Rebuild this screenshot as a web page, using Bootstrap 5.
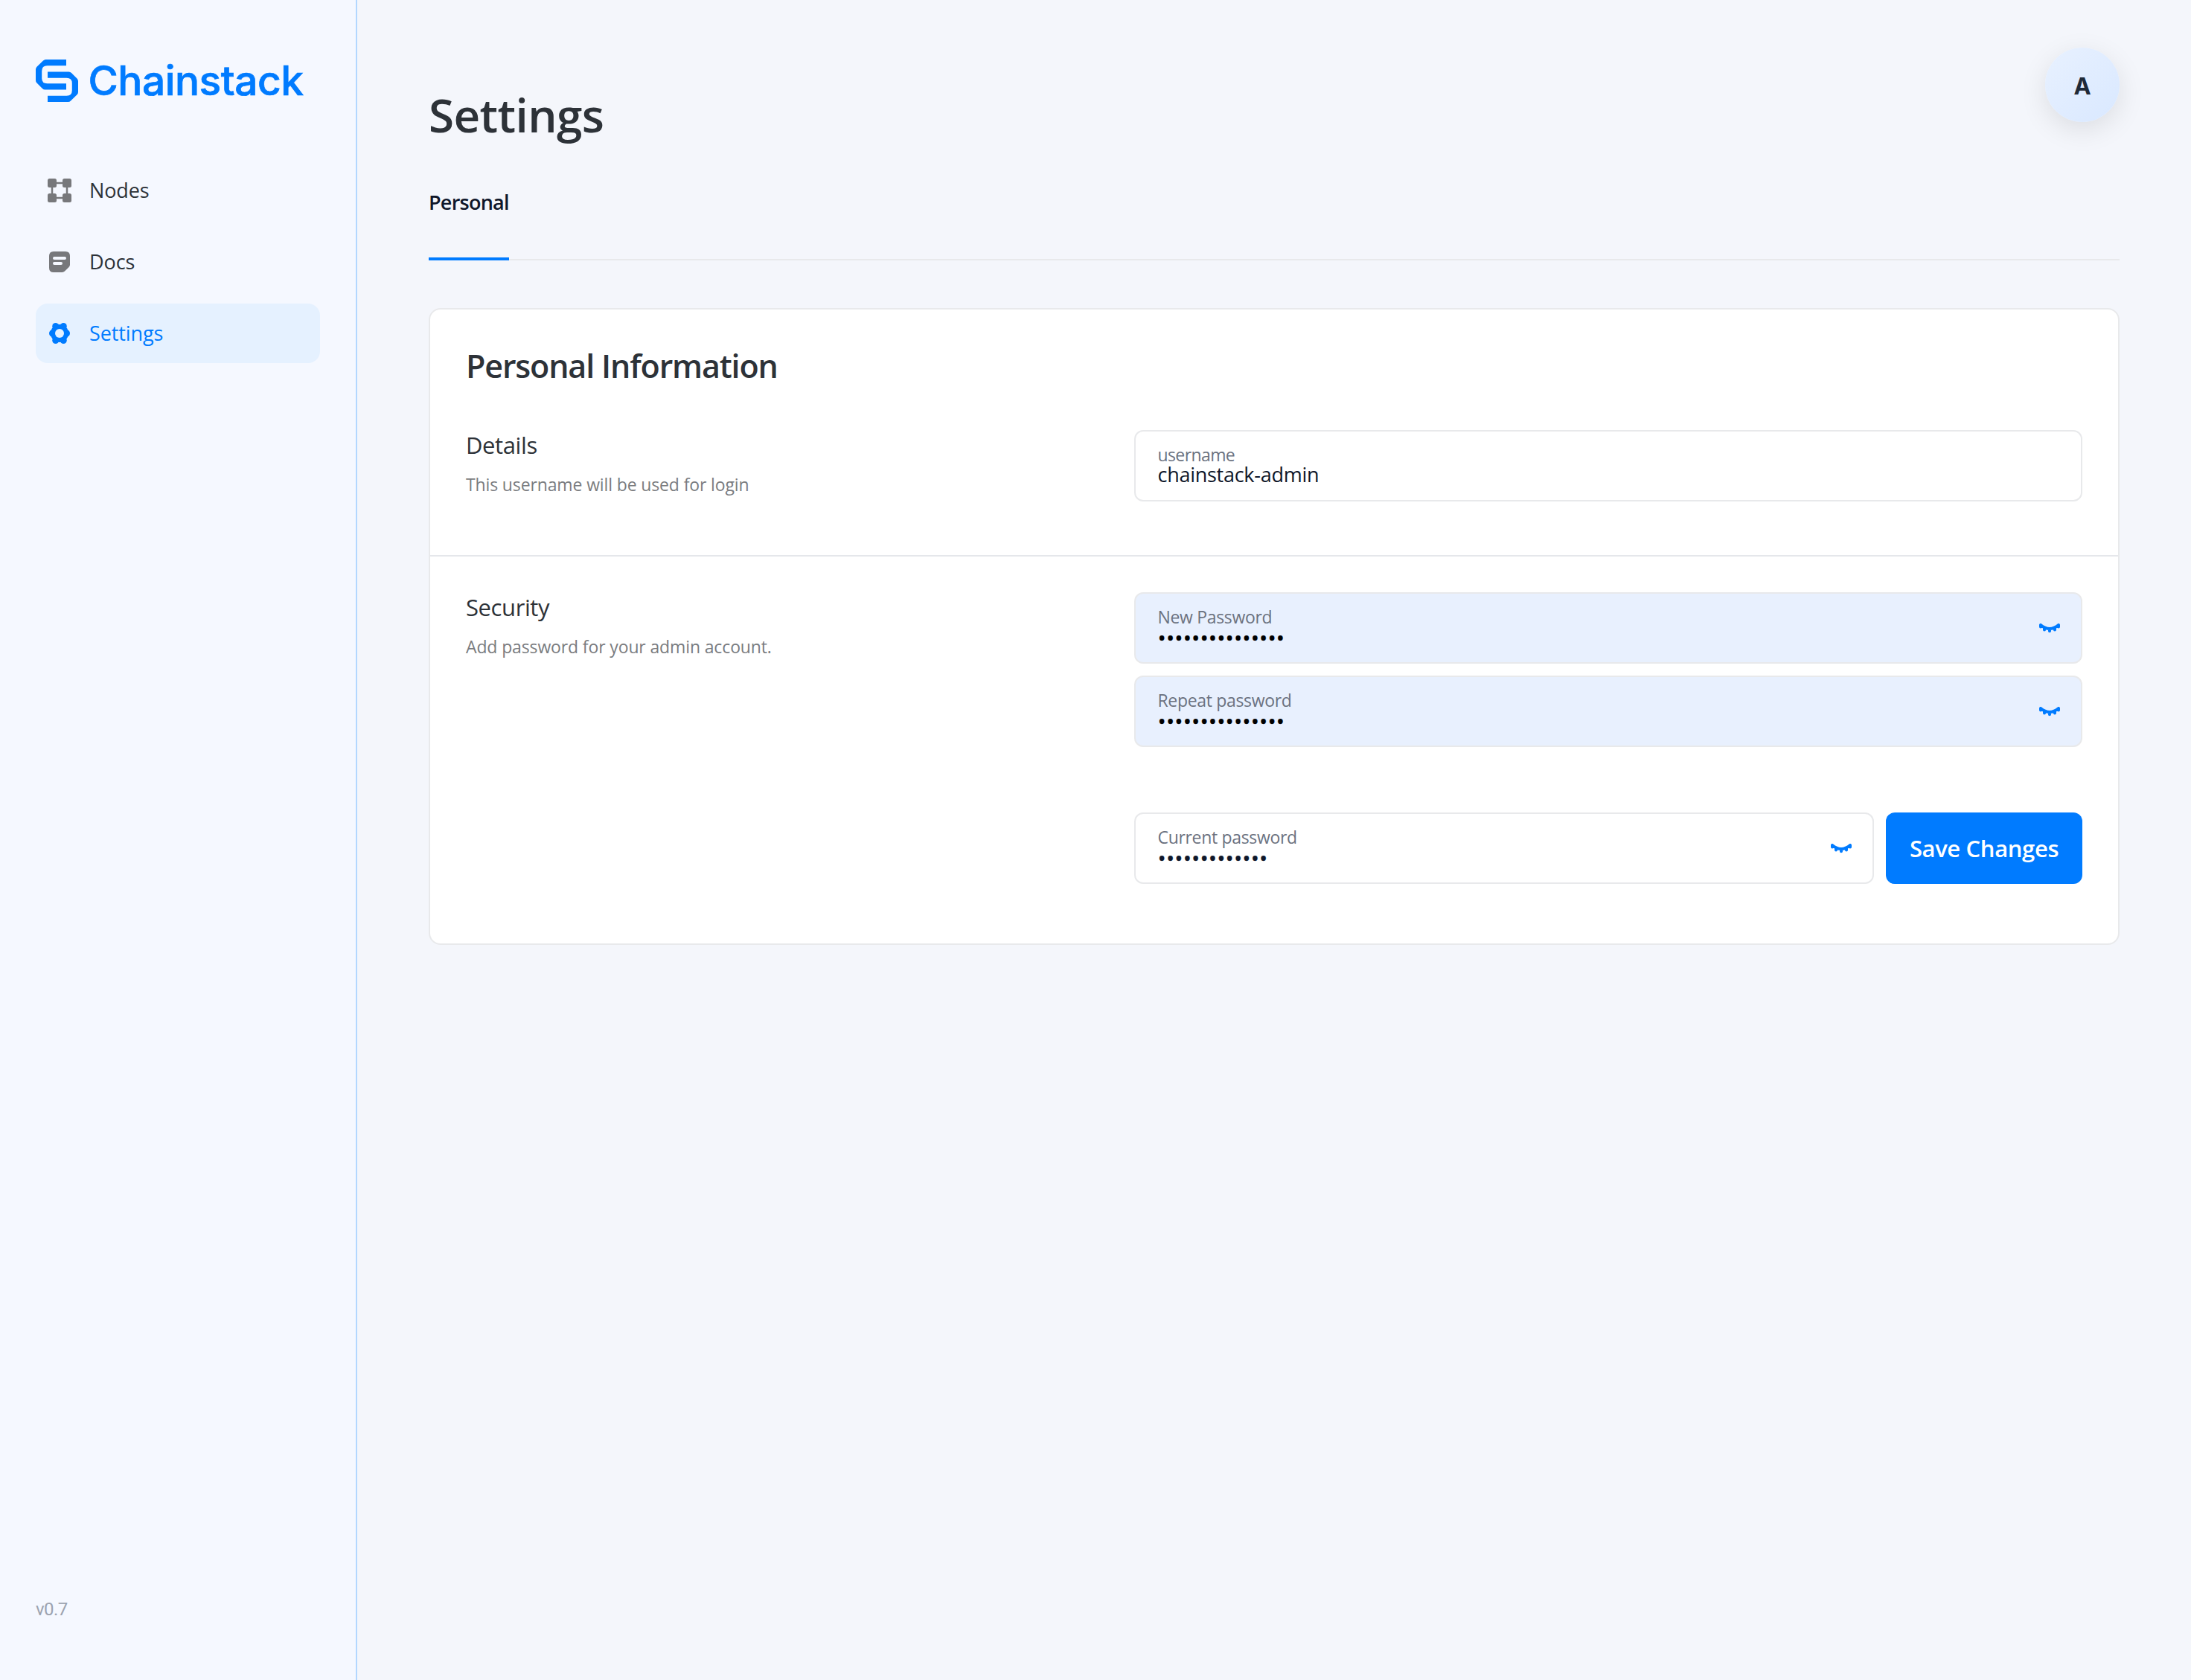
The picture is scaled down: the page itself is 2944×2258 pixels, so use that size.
<!DOCTYPE html>
<html lang="en">
<head>
<meta charset="utf-8">
<meta name="viewport" content="width=device-width, initial-scale=1">
<title>Chainstack – Settings</title>
<link href="https://cdn.jsdelivr.net/npm/bootstrap@5.3.0/dist/css/bootstrap.min.css" rel="stylesheet">
<style>
  :root { --brand: #007bff; --ink: #2d3238; --line: #e8e9eb; --soft: #77787b; }
  body { background: #f4f6fb; color: var(--ink); font-family: "Open Sans", "Noto Sans", sans-serif; font-size: 27px; }

  /* Sidebar */
  .side { width: 480px; flex: none; background: #f5f8ff; border-right: 2px solid #b2d7ff; padding: 79.5px 48px 77px; }
  .brand-row { height: 57px; gap: 13.5px; color: var(--brand); }
  .wordmark { font: 500 55px/57px Inter, sans-serif; letter-spacing: -.5px; -webkit-text-stroke: .7px var(--brand); }
  .side-nav { margin-top: 79.5px; gap: 16px; }
  .side-nav .nav-link { height: 80px; padding: 0 16px; gap: 24px; border-radius: 16px; color: var(--ink); line-height: 40px; letter-spacing: -.1px; }
  .side-nav .nav-link svg { width: 32px; height: 32px; flex: none; color: var(--soft); }
  .side-nav .nav-link.active, .side-nav .nav-link.active svg { background: #e5f1ff; color: var(--brand); }
  .version { font: 400 24px/36px Roboto, sans-serif; letter-spacing: -.6px; color: #9ca3af; }

  /* Page head */
  .page { padding: 64px 96px 0; }
  .page-title { font-size: 62px; line-height: 80px; font-weight: 600; letter-spacing: -.6px; margin: 50px 0 0; }
  .avatar { width: 100px; height: 100px; padding-top: 2px; font: 700 31px/1 Inter, sans-serif; color: #1f2937; background: linear-gradient(135deg, #e8f1ff, #d9e8ff); box-shadow: 0 10px 36px rgba(0,0,0,.1); }
  .tab-line { margin-top: 58px; border-bottom: 2px solid var(--line); }
  .tab-line .nav-link { padding: 0 0 54px; margin-bottom: -2px; border-bottom: 4px solid var(--brand); font-weight: 600; line-height: 40px; letter-spacing: -.75px; color: #0f172a; width: 108px; white-space: nowrap; }

  /* Card */
  .panel { margin-top: 64px; border: 2px solid var(--line); border-radius: 16px; background: #fff; }
  .panel-title { font-size: 43px; line-height: 56px; font-weight: 600; letter-spacing: -1.15px; margin: 0 0 58px; }
  .first-part { padding: 48px 48px 72px; border-bottom: 2px solid #e5e7eb; }
  .second-part { padding: 48px 48px 80px; }
  .part-name { font-size: 31px; line-height: 40px; font-weight: 400; letter-spacing: -.4px; margin: 0 0 15px; }
  .hint { font-size: 23px; line-height: 36px; letter-spacing: -.13px; color: #7a7c80; margin: 0; }
  .fields { width: 1274px; flex: none; }

  /* Fields */
  .field { height: 96px; padding: 18px 28px 0 29.5px; border: 2px solid var(--line); border-radius: 12px; background: #fff; color: #0f172a; }
  .field.filled { background: #e8f0fe; color: #000; }
  .field label { display: block; font-size: 23px; line-height: 26px; letter-spacing: -.33px; color: #6b7280; }
  .field .value { line-height: 27px; letter-spacing: -.27px; }
  .field .dots { font-size: 30px; line-height: 29px; letter-spacing: .1px; -webkit-text-stroke: .3px currentColor; }
  .field svg { width: 28px; height: 13px; margin-top: 22px; color: var(--brand); flex: none; }
  .confirm { margin-top: 88px; gap: 16px; }
  .save { width: 264px; height: 96px; border: 0; border-radius: 12px; background: var(--brand); font-size: 31px; font-weight: 600; letter-spacing: -.37px; padding: 0; white-space: nowrap; }
  .tight { letter-spacing: -.6px !important; }
</style>
</head>
<body>
<svg class="d-none" xmlns="http://www.w3.org/2000/svg">
  <symbol id="lashes" viewBox="0 0 28 13">
    <path d="M2 2Q14 12 26 2M2 2.2V4.6M26 2.2V4.6M7 6V8.6M21 6V8.6M14 7V10.2" fill="none" stroke="currentColor" stroke-width="4" stroke-linecap="round"/>
  </symbol>
</svg>

<div class="d-flex min-vh-100">
  <aside class="side d-flex flex-column">
    <div class="brand-row d-flex align-items-center">
      <svg width="57" height="57" viewBox="0 0 57 57" fill="currentColor">
        <path id="hook" d="M41 0H13.5Q11.5 0 10 1.5L1.5 9.7Q0 11.2 0 13.2V28Q0 30 1.5 31.5L9 39Q10.5 40.5 12.5 40.5H41V32.3H15.5Q8.2 32.3 8.2 25.3V15.5Q8.2 8.2 15.5 8.2H41Z"/>
        <use href="#hook" transform="rotate(180 28.5 28.5)"/>
      </svg>
      <span class="wordmark">Chainstack</span>
    </div>
    <nav class="side-nav nav flex-column">
      <a class="nav-link d-flex align-items-center" href="#">
        <svg viewBox="0 0 32 32" fill="currentColor"><path d="M6 6H26V26H6Z" fill="none" stroke="currentColor" stroke-width="2.5"/><rect width="12" height="12" rx="2.5"/><rect x="20" width="12" height="12" rx="2.5"/><rect y="20" width="12" height="12" rx="2.5"/><rect x="20" y="20" width="12" height="12" rx="2.5"/></svg>
        Nodes
      </a>
      <a class="nav-link d-flex align-items-center" href="#">
        <svg viewBox="0 0 32 32"><path d="M8 2H24Q30 2 30 8V19.5Q30 21.5 28.6 23L23 28.6Q21.5 30 19.5 30H8Q2 30 2 24V8Q2 2 8 2Z" fill="currentColor"/><path d="M9 11H23M9 18H18" stroke="#f5f8ff" stroke-width="4" stroke-linecap="round"/></svg>
        Docs
      </a>
      <a class="nav-link d-flex align-items-center active" href="#">
        <svg viewBox="-16 -16 32 32" fill="currentColor"><circle r="12"/><circle cx="-9" r="5"/><circle cx="9" r="5"/><circle cx="-5.3" cy="-9.5" r="4.5"/><circle cx="5.3" cy="-9.5" r="4.5"/><circle cx="-5.3" cy="9.5" r="4.5"/><circle cx="5.3" cy="9.5" r="4.5"/><circle r="6" fill="#e5f1ff"/></svg>
        Settings
      </a>
    </nav>
    <div class="version mt-auto">v0.7</div>
  </aside>

  <main class="page flex-grow-1">
    <header class="d-flex justify-content-between align-items-start">
      <h1 class="page-title">Settings</h1>
      <div class="avatar rounded-circle d-flex align-items-center justify-content-center">A</div>
    </header>
    <nav class="tab-line nav">
      <a class="nav-link" href="#">Personal</a>
    </nav>

    <section class="panel">
      <div class="first-part">
        <h2 class="panel-title">Personal Information</h2>
        <div class="d-flex justify-content-between">
          <div>
            <h3 class="part-name">Details</h3>
            <p class="hint">This username will be used for login</p>
          </div>
          <div class="fields">
            <div class="field">
              <label class="tight">username</label>
              <div class="value">chainstack-admin</div>
            </div>
          </div>
        </div>
      </div>

      <div class="second-part d-flex justify-content-between">
        <div>
          <h3 class="part-name">Security</h3>
          <p class="hint">Add password for your admin account.</p>
        </div>
        <div class="fields">
          <div class="d-flex flex-column gap-3">
            <div class="field filled d-flex justify-content-between">
              <div><label>New Password</label><div class="dots">•••••••••••••••</div></div>
              <svg><use href="#lashes"/></svg>
            </div>
            <div class="field filled d-flex justify-content-between">
              <div><label>Repeat password</label><div class="dots">•••••••••••••••</div></div>
              <svg><use href="#lashes"/></svg>
            </div>
          </div>
          <div class="confirm d-flex">
            <div class="field flex-grow-1 d-flex justify-content-between">
              <div><label>Current password</label><div class="dots">•••••••••••••</div></div>
              <svg><use href="#lashes"/></svg>
            </div>
            <button type="button" class="save btn btn-primary">Save Changes</button>
          </div>
        </div>
      </div>
    </section>
  </main>
</div>
<script src="https://cdn.jsdelivr.net/npm/bootstrap@5.3.0/dist/js/bootstrap.bundle.min.js"></script>
</body>
</html>
